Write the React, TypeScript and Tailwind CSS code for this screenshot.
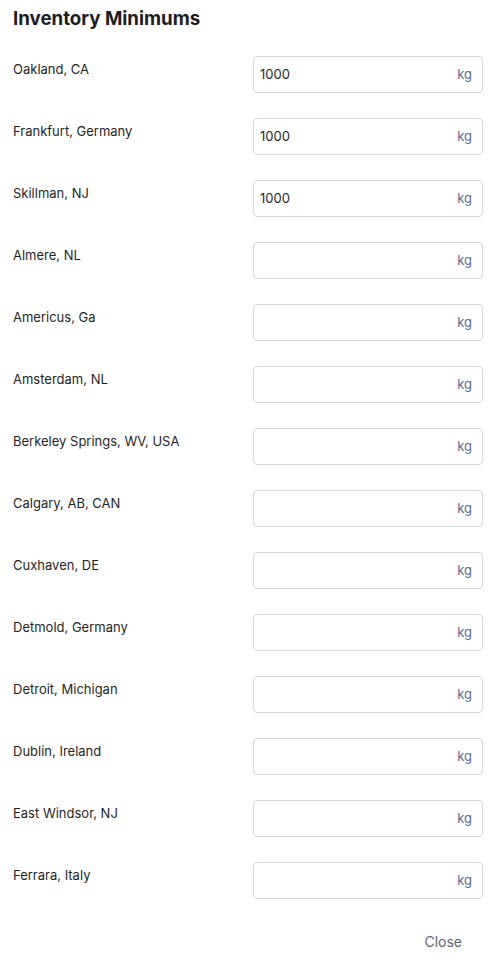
const sites: { name: string; value: string }[] = [
  { name: "Oakland, CA", value: "1000" },
  { name: "Frankfurt, Germany", value: "1000" },
  { name: "Skillman, NJ", value: "1000" },
  { name: "Almere, NL", value: "" },
  { name: "Americus, Ga", value: "" },
  { name: "Amsterdam, NL", value: "" },
  { name: "Berkeley Springs, WV, USA", value: "" },
  { name: "Calgary, AB, CAN", value: "" },
  { name: "Cuxhaven, DE", value: "" },
  { name: "Detmold, Germany", value: "" },
  { name: "Detroit, Michigan", value: "" },
  { name: "Dublin, Ireland", value: "" },
  { name: "East Windsor, NJ", value: "" },
  { name: "Ferrara, Italy", value: "" },
];

function MinimumRow({ name, value }: { name: string; value: string }) {
  return (
    <li className="flex items-start justify-between">
      <span className="pt-[3px] text-[13px] leading-5 text-[#1f1f24]">{name}</span>
      <div className="flex h-[37px] w-[230px] items-center rounded-[4px] border border-[#d4d7dd] bg-white pl-[6px] pr-[10px]">
        <input
          defaultValue={value}
          className="min-w-0 flex-1 bg-transparent text-[13px] text-[#1f1f24] outline-none"
        />
        <span className="text-[13px] text-[#5a6a8c]">kg</span>
      </div>
    </li>
  );
}

export default function App() {
  return (
    <div className="min-h-screen bg-white font-['Inter',sans-serif]">
      <div className="pl-[13px] pr-[14px] pt-[6px]">
        <h2 className="text-[18.7px] font-bold leading-[26px] text-[#1c1c22]">Inventory Minimums</h2>
        <ul className="mt-[24px] flex flex-col gap-[25px]">
          {sites.map((s) => (
            <MinimumRow key={s.name} name={s.name} value={s.value} />
          ))}
        </ul>
        <div className="mt-[26px] flex justify-end pr-[21px]">
          <button className="px-0 py-[6px] text-[14px] text-[#5f6672]">Close</button>
        </div>
      </div>
    </div>
  );
}
